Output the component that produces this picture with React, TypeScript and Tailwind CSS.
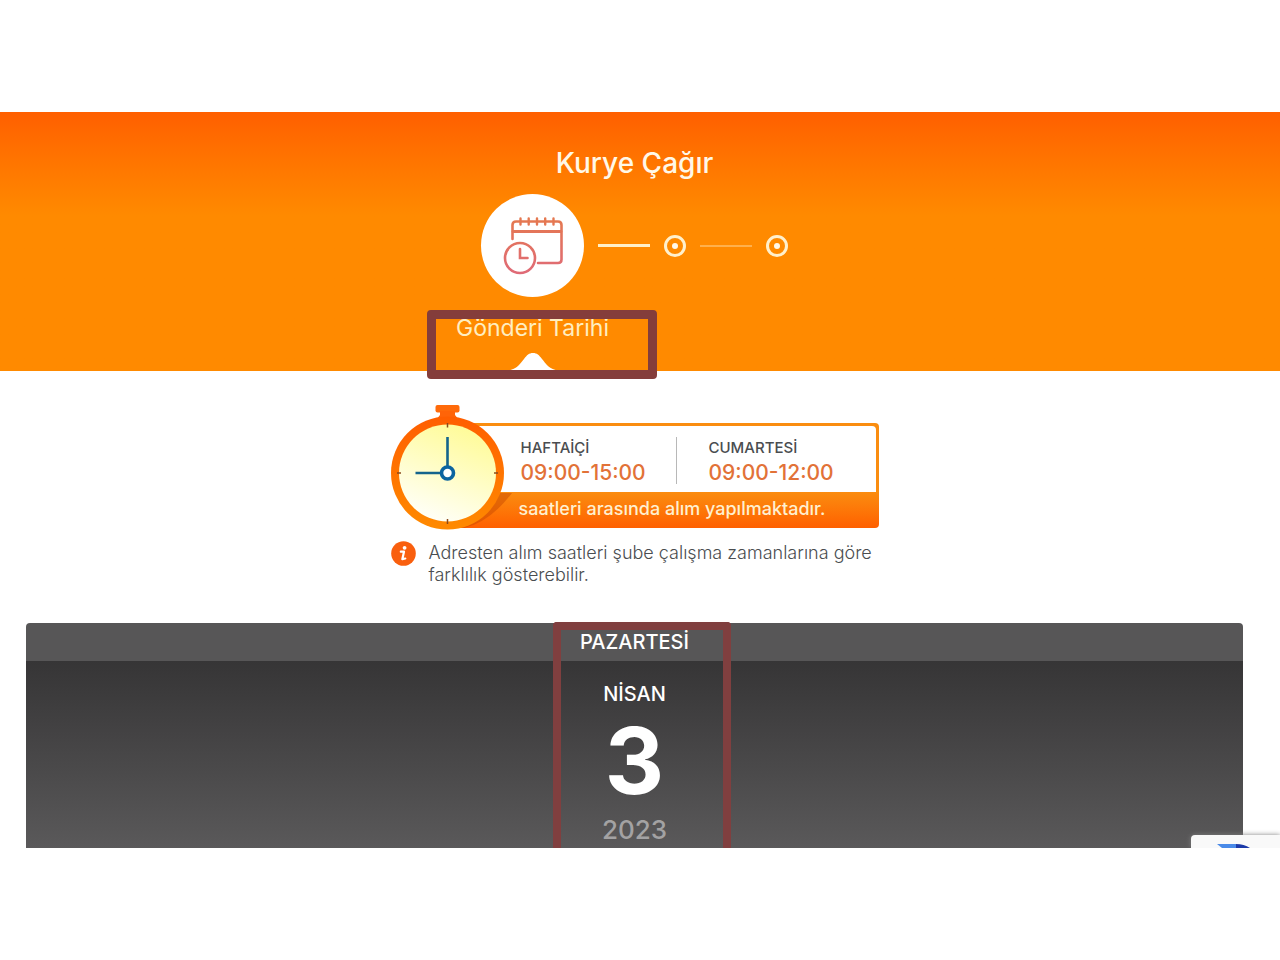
import React from 'react';

const HOURS = [
  { day: 'HAFTAİÇİ', range: '09:00-15:00' },
  { day: 'CUMARTESİ', range: '09:00-12:00' },
];

const CalendarIcon: React.FC = () => (
  <svg width="60" height="58" viewBox="0 0 60 58" fill="none" stroke="url(#cal)" strokeWidth="2.6" strokeLinecap="round">
    <defs>
      <linearGradient id="cal" gradientUnits="userSpaceOnUse" x1="0" y1="0" x2="0" y2="58">
        <stop offset="0" stopColor="#e5794f" />
        <stop offset="1" stopColor="#df6a78" />
      </linearGradient>
    </defs>
    <path d="M9.500 22V8Q9.500 4.500 13 4.500H55Q58.500 4.500 58.500 8V42.500Q58.500 46 55 46H35" />
    <path d="M10 14.500H58" strokeWidth="2.800" />
    <path d="M17.500 1.500V7.500M25.700 1.500V7.500M34 1.500V7.500M42.200 1.500V7.500M50.500 1.500V7.500" strokeWidth="2.400" />
    <circle cx="17" cy="41" r="15" />
    <path d="M17 32V41H24.500" />
  </svg>
);

const StopwatchIcon: React.FC = () => (
  <svg className="relative z-10 shrink-0" width="113" height="125" viewBox="0 0 113 125" fill="none">
    <defs>
      <linearGradient id="ring" x1="0" y1="0" x2="0" y2="1">
        <stop offset="0" stopColor="#ff5e00" />
        <stop offset="1" stopColor="#ff8a00" />
      </linearGradient>
      <linearGradient id="face" x1="0.700" y1="0" x2="0.300" y2="1">
        <stop offset="0" stopColor="#fffb96" />
        <stop offset="1" stopColor="#fffffa" />
      </linearGradient>
    </defs>
    <rect x="44.500" y="0" width="24" height="7.500" rx="2" fill="#ff6a0a" />
    <path d="M49 6H64V10L68 15H45L49 10Z" fill="#ff6408" />
    <circle cx="56.500" cy="68" r="56.500" fill="url(#ring)" />
    <circle cx="56.500" cy="68" r="48.500" fill="url(#face)" />
    <path d="M56.500 18V22.500M56.500 114V119M6 68H10M103 68H107" stroke="#8a4a1c" strokeWidth="1.500" />
    <path d="M56.500 32V61M24.500 68H50" stroke="#14648c" strokeWidth="2.600" />
    <circle cx="56.500" cy="68" r="6" fill="#fff" stroke="#0c64a0" strokeWidth="3.600" />
  </svg>
);

const InfoIcon: React.FC = () => (
  <svg className="shrink-0" width="25" height="25" viewBox="0 0 25 25" fill="none">
    <circle cx="12.500" cy="12.500" r="12.300" fill="#f95f0e" />
    <circle cx="13.600" cy="6.800" r="1.900" fill="#fff" />
    <path d="M9.800 10.700H13L11.300 18.200L14.300 17.500" stroke="#fff" strokeWidth="2.200" strokeLinecap="round" strokeLinejoin="round" />
  </svg>
);

const StepDot: React.FC<{ label: string }> = ({ label }) => (
  <button aria-label={label} className="flex size-[22px] items-center justify-center rounded-full border-[3px] border-[#fff0cc]">
    <span className="size-[6px] rounded-full bg-[#fff8e8]" />
  </button>
);

const Header: React.FC = () => (
  <header className="flex flex-col items-center bg-linear-to-b from-[#ff5f00] to-[#ff8a00] to-40% pt-8 pr-[11px]">
    <h1 className="text-[28px] font-medium leading-[38px] text-[#fff8e8]">Kurye Çağır</h1>
    <nav className="mt-3 flex gap-[14px]">
      <div className="relative flex w-[103px] flex-col items-center">
        <div className="flex size-[103px] items-center justify-center rounded-full bg-white">
          <CalendarIcon />
        </div>
        <span className="mt-4 whitespace-nowrap text-[23px] leading-[30px] text-[#ffeec0]">Gönderi Tarihi</span>
        <svg className="mt-[10px]" width="52" height="18" viewBox="0 0 52 18">
          <path d="M0 18C10 16 13 11 17 6C20 2 22 0 26 0C30 0 32 2 35 6C39 11 42 16 52 18Z" fill="#fff" />
        </svg>
        <div className="absolute top-[116px] -left-[54px] h-[69px] w-[230px] rounded border-[9px] border-[#843d3b]" />
      </div>
      <div className="flex h-[103px] items-center gap-[14px]">
        <span className="h-[3px] w-[52px] bg-[#fff0c8]" />
        <StepDot label="2. adım" />
        <span className="h-[2px] w-[52px] bg-[#ffb04c]" />
        <StepDot label="3. adım" />
      </div>
    </nav>
  </header>
);

const PickupHours: React.FC = () => (
  <section className="mx-auto max-w-[488px] pt-[34px]">
    <div className="flex items-end">
      <StopwatchIcon />
      <div className="-ml-14 mb-[2px] flex-1 overflow-hidden rounded bg-linear-to-b from-[#fa8d10] from-65% to-[#ff5f00]">
        <div className="mt-[3px] mr-[3px] flex h-[66px] items-center rounded-tr-sm bg-white pt-[3px] pl-[73px]">
          {HOURS.map((h, i) => (
            <div key={h.day} className={i > 0 ? 'border-l border-[#b8b8b8] pl-8' : 'w-[155px]'}>
              <div className="text-[15px] font-medium leading-[22px] text-[#4a4d50]">{h.day}</div>
              <div className="mt-[3px] text-[21px] font-medium leading-[22px] text-[#e27238]">{h.range}</div>
            </div>
          ))}
        </div>
        <div className="relative h-9 pl-[71px] text-lg font-medium leading-[34px] text-[#fff0d0]">
          <svg className="absolute top-0 left-0" width="70" height="36" viewBox="0 0 70 36">
            <path d="M0 36H16Q42 30 64 1H40Z" fill="#c94a00" opacity="0.500" />
          </svg>
          saatleri arasında alım yapılmaktadır.
        </div>
      </div>
    </div>
    <div className="mt-[11px] flex gap-[13px]">
      <InfoIcon />
      <p className="mt-px text-lg font-light leading-[22px] text-[#4a4d50]">
        Adresten alım saatleri şube çalışma zamanlarına göre farklılık gösterebilir.
      </p>
    </div>
  </section>
);

const DateCard: React.FC = () => (
  <section className="mx-[26px] mt-[37px] rounded-t bg-[#575657] text-center text-white">
    <div className="relative mx-auto w-40">
      <div className="absolute -top-px -left-[2px] h-[226px] w-[178px] rounded-t border-8 border-b-0 border-[#803f3f]" />
    </div>
    <h2 className="pt-px text-xl font-medium leading-[37px]">PAZARTESİ</h2>
    <div className="bg-linear-to-b from-[#363536] to-[#5a595a] pt-[21px]">
      <div className="text-xl font-medium leading-6">NİSAN</div>
      <div className="mt-1 text-[92px] font-bold leading-[102px]">3</div>
      <div className="text-[26px] font-medium leading-9 text-[#a3a2a3]">2023</div>
    </div>
  </section>
);

export default function App() {
  return (
    <div className="bg-white py-28 font-[Inter,'Liberation_Sans',sans-serif]">
      <div className="relative overflow-hidden">
        <Header />
        <main className="pr-[11px]">
          <PickupHours />
          <DateCard />
        </main>
        <div className="absolute right-0 bottom-0 h-[13px] w-[89px] overflow-hidden rounded-tl bg-[#f9f9f9] pt-[9px] pl-[26px] shadow-[0_0_5px_#808080]">
          <svg width="34" height="4" viewBox="0 0 34 4">
            <path d="M0 0H19V4H5Z" fill="#4a8ae8" />
            <path d="M19 0Q27 0 33 4H19Z" fill="#1c3aa9" />
          </svg>
        </div>
      </div>
    </div>
  );
}
